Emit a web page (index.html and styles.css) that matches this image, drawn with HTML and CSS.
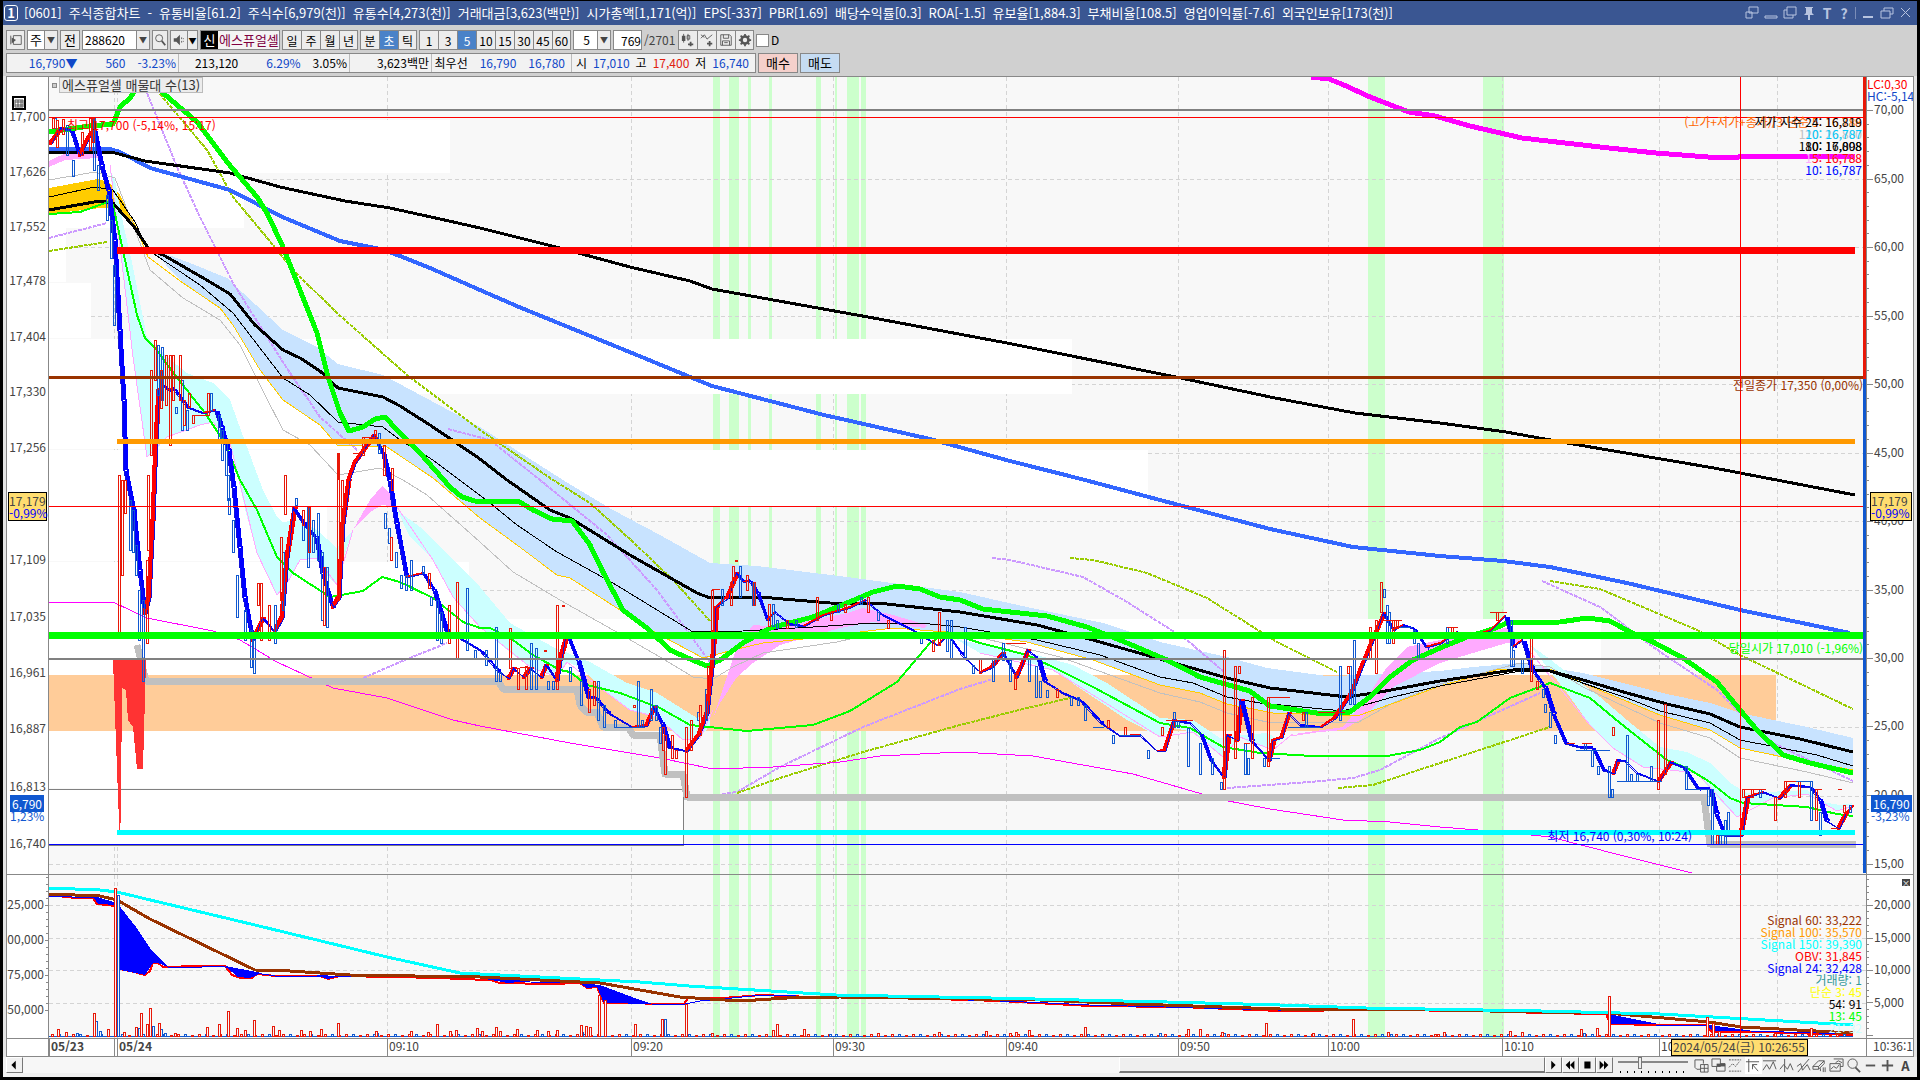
FILE: index.html
```html
<!DOCTYPE html>
<html lang="ko">
<head>
  <meta charset="UTF-8" />
  <title>[0601] 주식종합차트</title>
  <link rel="stylesheet" href="styles.css">
</head>
<body>

  <header class="titlebar">
    <span class="win-no">1</span>
    <h1>
      <span>[0601]</span>
      <span>주식종합차트</span>
      <span>-</span>
      <span>유통비율[61.2]</span>
      <span>주식수[6,979(천)]</span>
      <span>유통수[4,273(천)]</span>
      <span>거래대금[3,623(백만)]</span>
      <span>시가총액[1,171(억)]</span>
      <span>EPS[-337]</span>
      <span>PBR[1.69]</span>
      <span>배당수익률[0.3]</span>
      <span>ROA[-1.5]</span>
      <span>유보율[1,884.3]</span>
      <span>부채비율[108.5]</span>
      <span>영업이익률[-7.6]</span>
      <span>외국인보유[173(천)]</span>
    </h1>
    <div class="win-icons">
      <svg viewBox="0 0 14 14"><path d="M4 1h9v6H4zM1 6h6v6H1z"/></svg>
      <svg viewBox="0 0 14 14"><path d="M1 10h12v2H1z"/></svg>
      <svg viewBox="0 0 14 14"><path d="M4 1h9v8H4zM4 4H1v8h9V9"/></svg>
      <svg viewBox="0 0 14 14"><path class="solid" d="M3 1h8v1h-1v5l2 2H8v5H6V9H2l2-2V2H3z"/></svg>
      <b>T</b>
      <b>?</b>
      <i></i>
      <svg viewBox="0 0 14 14"><path class="solid" d="M2 10h10v2H2z"/></svg>
      <svg viewBox="0 0 14 14"><path d="M4 5V2h9v6h-3M1 5h9v7H1z"/></svg>
      <svg viewBox="0 0 14 14"><path d="M2 2l9 9M11 2l-9 9"/></svg>
    </div>
  </header>

  <div class="toolbar">
    <button class="tool" aria-label="목록"><svg viewBox="0 0 16 16"><path d="M5 3h9v10H5zM2 3v10"/><path class="fill" d="M3 5l5 3-5 4z"/></svg></button>
    <div class="combo w31"><span>주</span><button aria-label="열기">▼</button></div>
    <button class="tool w20">전</button>
    <div class="combo w68"><input type="text" value="288620" aria-label="종목코드" /><button aria-label="열기">▼</button></div>
    <button class="tool w16" aria-label="검색"><svg viewBox="0 0 16 16"><circle cx="7" cy="6" r="4"/><path d="M10 9l4 5" stroke-width="2"/></svg></button>
    <div class="group sound">
      <button aria-label="소리"><svg viewBox="0 0 16 16"><path class="fill" d="M2 6h3l4-4v12L5 10H2z"/><path d="M11 5v2M11 9v2M13 6v1M13 9v1"/></svg></button>
      <button class="thin" aria-label="열기">▼</button>
    </div>
    <div class="stock"><b>신</b><span>에스퓨얼셀</span></div>
    <div class="group">
      <button>일</button><button>주</button><button>월</button><button>년</button>
    </div>
    <div class="group">
      <button>분</button><button class="on">초</button><button>틱</button>
    </div>
    <div class="group">
      <button>1</button><button>3</button><button class="on">5</button><button>10</button><button>15</button><button>30</button><button>45</button><button>60</button>
    </div>
    <div class="combo w38"><input type="text" class="mid" value="5" aria-label="주기" /><button aria-label="열기">▼</button></div>
    <input type="text" class="count" value="769" aria-label="조회수" />
    <span class="total">/2701</span>
    <div class="group icons">
      <button aria-label="차트유형"><svg viewBox="0 0 16 16"><path class="fill" d="M1 3h4v6H1zM10 10h2v5h-2zM8 12h6v2H8z"/><path d="M3 1v10M8 1v8M7 3h3v4H7z"/></svg></button>
      <button aria-label="지표추가"><svg viewBox="0 0 16 16"><path d="M1 6l4-4 3 5 6-5M1 2l4 3"/><path class="fill" d="M10 9h2v6h-2zM8 11h6v2H8z"/></svg></button>
      <button aria-label="저장"><svg viewBox="0 0 16 16"><path d="M2 2h10l2 2v10H2zM5 2v4h6V2M4 14V9h8v5M6 11h4"/></svg></button>
      <button aria-label="설정"><svg viewBox="0 0 16 16"><circle cx="8" cy="8" r="4" stroke-width="3"/><path d="M8 1v3M8 12v3M1 8h3M12 8h3M3 3l2 2M11 11l2 2M13 3l-2 2M5 11l-2 2" stroke-width="2"/></svg></button>
    </div>
    <label class="check"><input type="checkbox" />D</label>
  </div>

  <div class="quotebar">
    <div class="quote">
      <div class="cell c1"><span class="down">16,790<em>▼</em></span><span class="down">560</span><span class="down">-3.23%</span></div>
      <div class="cell c2"><span>213,120</span><span class="down">6.29%</span><span>3.05%</span></div>
      <div class="cell c3"><span>3,623백만</span></div>
      <div class="cell c4"><span>최우선</span><span class="down">16,790</span><span class="down">16,780</span></div>
      <div class="cell c5"><span>시</span><span class="down">17,010</span><span>고</span><span class="up">17,400</span><span>저</span><span class="down">16,740</span></div>
    </div>
    <button class="buy">매수</button>
    <button class="sell">매도</button>
  </div>

  <main class="chart">
    <div class="axis left" id="leftMain">
      <svg class="grid-icon" viewBox="0 0 14 14"><path d="M1 1h12v12H1z" stroke="#000" stroke-width="2"/><path d="M3 4h8v7H3zM3 6h8M3 9h8M6 4v7M9 4v7"/></svg>
      <div class="price-tag cross">17,179<br><span>-0,99%</span></div>
      <div class="price-tag now"><b>6,790</b><br>1,23%</div>
    </div>

    <section class="plot price">
      <svg id="main" viewBox="49 77 1817 797" preserveAspectRatio="none" shape-rendering="crispEdges">
        <!-- signal bands -->
        <path class="signal" d="M713 77h7v797h-7zM729 77h10v797h-10zM748 77h3v797h-3zM769 77h3v797h-3zM816 77h5v797h-5zM835 77h2v797h-2zM847 77h12v797h-12zM861 77h5v797h-5zM1368 77h17v797h-17zM1483 77h21v797h-21z"/>
        <path class="grid" d="M49 179.500H1866M49 247.500H1866M49 316.500H1866M49 384.500H1866M49 453.500H1866M49 521.500H1866M49 590.500H1866M49 727.500H1866M49 796.500H1866M49 864.500H1866M114.500 77V874M117.500 77V874M387.500 77V874M631.500 77V874M833.500 77V874M1006.500 77V874M1178.500 77V874M1328.500 77V874M1502.500 77V874M1659.500 77V874M1777.500 77V874"/>
        <!-- volume by price -->
        <path fill="#fff" d="M49 120h401v53H49zM49 173h195v55H49zM49 228h17v54H49zM49 283h42v55H49zM49 339h1023v55H49zM49 394h342v55H49zM49 450h1099v56H49zM49 507h278v54H49zM49 562h420v57H49zM49 619h1552v56H49zM49 731h571v57H49z"/>
        <path class="poc" d="M49 675h1727v56H49z"/>
        <path fill="#fff" stroke="#808080" d="M48 789.500H683.500V845.500H48z"/>

        <!-- envelopes -->
        <path fill="#fc0" d="M49 188 98 179 110 183 120 195 135 226 130 222 115 207 100 208 49 214z"/>
        <path fill="#c8e3ff" d="M150 248 190 263 227 278 243 293 283 330 317 347 338 364 383 375 480 427 563 480 613 510 660 535 710 563 757 566 847 577 960 592 1027 607 1103 623 1160 642 1227 657 1267 668 1327 676 1367 675 1440 671 1473 667 1520 663 1583 673 1667 694 1710 703 1740 713 1807 727 1853 738 1853 770 1807 762 1740 748 1710 730 1660 715 1597 689 1550 669 1500 669 1440 686 1397 702 1357 716 1273 713 1227 704 1200 693 1160 685 1093 660 1027 642 960 633 893 628 860 632 813 638 763 643 733 650 703 658 647 628 620 610 570 578 557 575 517 545 480 518 433 478 387 447 337 445 320 425 283 400 260 370 233 325 220 308 183 283z"/>
        <path fill="#cff" d="M110 170 115 180 123 223 133 267 147 337 167 357 187 373 213 383 230 400 247 447 263 490 277 517 283 522 300 520 317 530 337 548 353 530 343 560 337 585 328 577 317 558 300 560 287 583 277 595 257 553 247 517 240 487 230 443 213 422 200 425 167 437 153 453 147 457 133 357 122 263z"/>
        <path fill="#cff" d="M397 510 420 527 450 557 480 587 510 623 553 647 590 662 627 683 657 693 697 718 710 713 710 725 700 738 683 740 657 717 630 710 607 693 580 667 567 662 557 677 530 667 513 655 480 627 453 597 433 560 410 537z"/>
        <path fill="#cff" d="M940 630 960 640 993 647 1037 655 1073 665 1107 683 1160 718 1193 720 1220 738 1243 735 1267 733 1280 740 1273 750 1250 743 1240 737 1223 757 1193 732 1173 728 1160 737 1127 720 1093 697 1053 670 1027 662 980 653z"/>
        <path fill="#cff" d="M1530 645 1547 657 1573 677 1600 697 1627 720 1660 747 1687 752 1710 763 1730 783 1747 793 1807 790 1823 802 1840 805 1853 803 1837 811 1823 804 1807 794 1773 798 1750 807 1737 817 1717 798 1697 773 1670 770 1643 767 1613 748 1590 725 1567 693z"/>
        <path fill="#faf" d="M49 161 70 151 100 150 98 158 65 160 49 167zM353 530 370 500 382 486 392 495 397 507 382 505 370 512zM713 718 727 677 737 647 753 625 780 627 813 620 847 613 863 608 893 615 927 625 925 628 873 622 840 628 780 645 753 663 737 677 720 703zM1287 735 1343 727 1367 697 1387 667 1407 647 1440 640 1510 627 1523 643 1507 643 1473 653 1440 663 1393 687 1360 720 1343 730z"/>
        <path class="thin-pink" d="M110 165 122 263 133 357 147 457 167 437 200 425 213 422 230 443 257 553 277 595 287 583 300 560 317 558 337 585 353 530M397 507 433 560 453 597 480 627 530 667 557 677 567 662 607 693 630 710 657 717 683 740 700 738 713 710M980 653 1053 670 1160 737 1193 732 1223 757 1240 737 1273 750 1290 736 1343 728M1523 643 1590 725 1613 748 1643 767 1697 773 1737 817 1773 798 1807 794 1837 811 1853 806"/>

        <!-- dotted forecasts -->
        <path class="dots purple" d="M49 238 107 223M147 93 177 167 200 217 233 283 267 337 290 373 320 417 357 450M448 429 490 440 540 480 607 535 657 590 710 662M363 678 400 662 447 643M722 794 737 792 780 767 863 727 960 689 993 679M992 558 1010 560 1083 577 1127 602 1187 640 1223 671M1227 788 1310 782 1353 778 1380 770 1440 738 1540 693M1542 581 1600 607 1653 647 1717 690 1747 720 1773 743 1853 781"/>
        <path class="dots olive" d="M49 251 107 242M160 94 207 150 233 197 273 245 293 270 337 313 407 375 480 430 553 480 590 503 633 542 673 580 710 621M737 793 780 778 863 752 960 725 1027 708 1070 698M1070 558 1093 560 1147 573 1207 598 1277 642 1337 672M1338 788 1373 785 1440 763 1550 727M1550 581 1600 589 1697 630 1740 655 1853 709"/>

        <!-- moving averages -->
        <g class="ma">
          <path stroke="#c0c0c0" d="M49 180 95 172 115 178 135 230 150 270 183 298 220 320 240 345 265 395 283 430 310 445 338 475 380 468 403 480 427 495 480 542 513 572 560 600 613 630 660 657 693 677 713 679 733 667 763 653 837 642 880 632 960 633 1003 643 1060 657 1160 693 1200 702 1227 713 1267 722 1357 723 1393 703 1440 684 1520 663 1550 667 1583 687 1660 723 1710 738 1740 758 1807 772 1853 783"/>
          <path stroke="#fc0" d="M113 190 135 225 148 257 183 283 220 308 233 325 260 370 283 400 320 425 337 445 387 447 433 478 480 518 517 545 557 575 570 578 620 610 647 628 703 658 733 650 763 643 813 638 860 632 893 628 960 633 1027 642 1093 660 1160 685 1200 693 1227 704 1273 713 1357 716 1397 702 1440 686 1500 669 1550 669 1597 689 1660 715 1710 730 1740 748 1807 762 1853 770"/>
          <path stroke="#000" d="M49 197 95 187 113 190 135 222 148 250 200 285 233 313 283 378 310 395 338 422 383 427 400 440 433 460 490 503 517 525 557 552 613 583 693 632 743 631 813 627 873 623 920 623 960 627 1037 640 1100 655 1160 677 1193 683 1227 697 1260 703 1343 711 1393 697 1440 686 1520 671 1550 672 1627 698 1660 711 1710 723 1740 740 1817 755 1853 766"/>
          <path stroke="#f0f" d="M49 602 100 602 115 603 147 618 213 631 240 640 277 662 333 688 387 698 453 720 480 726 570 743 660 758 713 769 773 767 840 762 880 756 960 752 1033 756 1133 774 1223 800 1270 809 1343 820 1390 822 1440 827 1503 832 1550 837 1620 855 1692 873"/>
          <path stroke="#36f" stroke-width="4" d="M49 149 110 149 120 152 150 168 230 190 280 216 340 241 380 249 400 256 430 268 480 290 519 307 632 353 712 386 824 415 930 439 1010 461 1085 480 1160 500 1270 529 1353 547 1440 556 1503 561 1550 567 1627 583 1740 610 1850 633"/>
          <path stroke="#000" stroke-width="3" d="M49 152 115 153 145 161 230 173 280 187 345 201 390 208 440 219 480 228 556 247 630 267 690 281 712 289 868 317 1007 343 1176 377 1275 398 1355 413 1440 423 1506 432 1567 443 1714 468 1855 495"/>
          <path stroke="#000" stroke-width="3" d="M49 210 100 201 113 203 135 228 148 248 165 256 205 279 230 294 255 325 283 350 300 358 320 371 338 388 383 397 400 406 430 425 480 459 507 480 550 510 570 518 630 555 667 576 697 593 710 598 760 597 830 603 887 604 960 612 1037 625 1093 640 1160 659 1227 678 1270 688 1347 697 1380 692 1440 681 1520 669 1550 671 1583 680 1627 693 1667 704 1710 714 1740 727 1800 739 1853 752"/>
          <path stroke="#0f0" stroke-width="2" d="M49 214 80 212 108 202 113 205 125 260 137 315 145 338 155 348 175 375 205 413 225 443 240 480 257 510 277 557 293 573 330 597 363 591 382 577 400 582 433 598 463 622 480 628 490 628 513 640 533 655 560 670 570 672 587 685 620 693 660 708 690 725 747 731 813 725 850 711 897 682 930 643 947 632 980 643 1027 655 1053 667 1093 687 1160 723 1190 728 1223 747 1260 753 1313 756 1387 756 1420 750 1440 742 1460 727 1477 722 1510 698 1550 683 1590 698 1620 723 1667 760 1687 768 1710 782 1730 798 1743 803 1807 807 1837 814 1853 816"/>
          <path stroke="#0f0" stroke-width="5" d="M49 132 90 126 113 124 120 107 130 98 138 86 147 77 155 84 163 93 197 122 227 162 257 197 267 213 283 247 300 290 317 333 328 377 340 413 349 431 363 427 375 419 385 417 397 430 420 453 450 487 462 497 475 501 518 501 533 510 552 519 572 521 590 545 603 572 623 610 647 628 670 650 690 659 707 666 720 660 743 643 770 628 813 617 847 603 873 592 897 586 920 589 940 597 960 600 983 609 1047 616 1087 627 1127 643 1167 660 1200 677 1250 691 1270 706 1323 714 1350 712 1370 697 1390 677 1413 660 1440 648 1467 637 1493 629 1507 623 1560 622 1587 618 1610 621 1630 632 1653 642 1683 658 1717 682 1740 710 1757 730 1783 755 1810 763 1853 773"/>
          <path stroke="#f0f" stroke-width="5" d="M1311 77 1329 79 1344 85 1370 97 1409 112 1435 116 1470 126 1522 138 1565 143 1609 148 1656 153 1708 157 1739 157 1741 156 1855 156"/>
          <path stroke="#c0c0c0" stroke-width="7" d="M137 645 146 681 498 681 503 689 577 689 580 705 586 712 597 712 603 727 628 727 633 735 660 735 665 774 683 774 687 797 1704 797 1710 844 1856 844"/>
        </g>

        <path fill="#f33" d="M113 660H146L143 769H137L133 727 128 720 126 690 122 688 121 800 120 847 117 770z"/>
        <g id="price"></g>
        <g id="candles"></g>

        <!-- price levels -->
        <path class="level" stroke="#808080" stroke-width="2" d="M49 110H1866M49 659H1866"/>
        <path class="level" stroke="red" d="M49 117.500H1866"/>
        <path class="level" stroke="red" stroke-width="7" d="M117 250.500H1855"/>
        <path class="level" stroke="#930" stroke-width="3" d="M49 377.500H1866"/>
        <path class="level" stroke="#f90" stroke-width="5" d="M117 441.500H1855"/>
        <path class="level" stroke="#0f0" stroke-width="7" d="M49 635.500H1866"/>
        <path class="level" stroke="#0ff" stroke-width="5" d="M117 832.500H1855"/>
        <path class="level" stroke="blue" d="M49 844.500H1866"/>
        <path class="level" stroke="red" d="M49 506.500H1866M1740.500 77V874"/>
      </svg>
      <div class="chart-title"><i></i><span>에스퓨얼셀 매물대 수(13)</span></div>
      <span class="note high">최고 17,700 (-5,14%, 15:17)</span>
      <span class="note prev">전일종가 17,350 (0,00%)</span>
      <span class="note open">당일시가 17,010 (-1,96%)</span>
      <span class="note low">최저 16,740 (0,30%, 10:24)</span>
      <div class="legend under">
        <span class="orange">(고가+저가+종가)/3 단순 5: 16,788</span>
        <span class="gray">120: 26,800</span>
        <span class="black">180: 16,808</span>
        <span class="pink">15: 16,788</span>
        <span class="pale">30: 16,787</span>
      </div>
      <div class="legend">
        <span class="black">저가 지수 24: 16,819</span>
        <span class="cyan">10: 16,787</span>
        <span class="black">10: 17,098</span>
        <span class="red">5: 16,788</span>
        <span class="blue">10: 16,787</span>
      </div>
    </section>

    <div class="axis right" id="rightMain">
      <div class="limits"><span class="red">LC:0,30</span><br><span class="down">HC:-5,14</span></div>
      <div class="price-tag cross">17,179<br><span>-0,99%</span></div>
      <div class="price-tag now"><b>16,790</b><br>-3,23%</div>
    </div>

    <div class="axis left lower" id="leftSub"></div>
    <section class="plot lower">
      <svg id="sub" viewBox="49 875 1817 163" preserveAspectRatio="none" shape-rendering="crispEdges">
        <path class="signal" d="M713 875h7v163h-7zM729 875h10v163h-10zM748 875h3v163h-3zM769 875h3v163h-3zM816 875h5v163h-5zM835 875h2v163h-2zM847 875h12v163h-12zM861 875h5v163h-5zM1368 875h17v163h-17zM1483 875h21v163h-21z"/>
        <path class="grid" d="M49 905.500H1866M49 938.500H1866M49 970.500H1866M49 1003.500H1866M114.500 875V1038M117.500 875V1038M387.500 875V1038M631.500 875V1038M833.500 875V1038M1006.500 875V1038M1178.500 875V1038M1328.500 875V1038M1502.500 875V1038M1659.500 875V1038M1777.500 875V1038"/>
        <path class="line" stroke="red" stroke-width="2" d="M49 895 75 898 93 898 97 904 115 906 119 969 130 971 145 975 150 971 153 963 158 963 163 967 200 966 225 966 232 975 240 978 252 978 257 974 275 976 320 976 328 979 340 976 440 978 460 979 490 980 500 983 550 984 580 983 587 988 597 987 604 1003 684 1004 688 998 722 998 762 995 811 997 901 998 1000 1001 1090 1006 1180 1007 1280 1011 1370 1010 1484 1011 1540 1013 1606 1014 1610 1024 1656 1025 1706 1025 1712 1032 1760 1032 1853 1035"/>
        <path fill="blue" d="M75 895 94 896 117 903 136 927 150 948 168 967 158 963 153 963 145 975 120 970 117 905 98 904 94 898zM225 966 262 973 250 978 238 977zM315 975 340 976 328 979zM480 978 530 981 508 983zM580 983 600 985 640 1000 652 1004 604 1003 597 987 587 988zM1270 1008 1300 1010 1280 1011zM1609 1014 1658 1024 1611 1024zM1707 1025 1750 1031 1712 1031z"/>
        <path class="line" stroke="blue" d="M49 896 94 898M168 967 190 968 215 966 225 967 262 974 275 976 340 976 440 976 490 978 530 982 580 983M652 1004 685 1004 700 1001 722 999 762 995 780 995 811 997 901 998 1000 1001 1048 1003 1089 1005 1280 1010 1400 1009 1484 1010 1607 1014M1656 1025 1705 1025 1750 1031 1853 1034"/>
        <path class="line" stroke="#930" stroke-width="3" d="M49 894 100 896 117 900 150 919 255 970 290 971 350 975 480 977 600 983 640 990 680 997 740 1001 787 998 840 997 1040 1000 1134 1004 1280 1009 1360 1010 1440 1010 1541 1012 1607 1013 1709 1022 1741 1027 1853 1033"/>
        <path class="line" stroke="#0ff" stroke-width="3" d="M49 888 100 890 117 892 255 925 387 957 460 973 640 982 689 986 836 995 991 998 1167 1002 1280 1005 1366 1008 1541 1011 1660 1014 1853 1025"/>
        <g id="volume"></g>
        <path class="level" stroke="red" d="M1740.500 875V1038"/>
      </svg>
      <div class="legend sub">
        <span class="brown">Signal 60: 33,222</span>
        <span class="amber">Signal 100: 35,570</span>
        <span class="aqua">Signal 150: 39,390</span>
        <span class="red">OBV: 31,845</span>
        <span class="blue">Signal 24: 32,428</span>
        <span class="teal">거래량: 1</span>
        <span class="yellow">단순 3: 45</span>
        <span class="black">54: 91</span>
        <span class="lime">13: 45</span>
        <span class="pale">21: 32</span>
      </div>
    </section>
    <div class="axis right lower" id="rightSub"><button class="close" aria-label="닫기">×</button></div>

    <div class="time-edge"></div>
    <div class="times" id="times"><span class="time-tag">2024/05/24(금) 10:26:55</span></div>
    <div class="time-edge end">10:36:1</div>
  </main>

  <footer class="footer">
    <button class="push" aria-label="왼쪽"><svg viewBox="0 0 16 16"><path d="M10 3v10L5 8z"/></svg></button>
    <div class="track"><div class="thumb"></div></div>
    <button class="push" aria-label="재생"><svg viewBox="0 0 16 16"><path d="M6 3v10l5-5z"/></svg></button>
    <button class="push" aria-label="뒤로"><svg viewBox="0 0 16 16"><path d="M8 3v10L3 8zM13 3v10L8 8z"/></svg></button>
    <button class="push" aria-label="정지"><svg viewBox="0 0 16 16"><path d="M5 4h7v8H5z"/></svg></button>
    <button class="push" aria-label="앞으로"><svg viewBox="0 0 16 16"><path d="M3 3v10l5-5zM8 3v10l5-5z"/></svg></button>
    <input type="range" class="speed" min="0" max="10" value="3" aria-label="속도" />
    <div class="draw-tools">
      <button aria-label="창추가"><svg viewBox="0 0 16 16"><path d="M7 12H3L1 10V2h9v4M7 7h8v8H7zM11 7v8M7 11h8"/></svg></button>
      <button aria-label="복사"><svg viewBox="0 0 16 16"><path d="M1 1h9v8H1zM6 9v5h9V6h-5"/><path class="fill" d="M6 6h9v3H6z"/></svg></button>
      <button aria-label="추세"><svg viewBox="0 0 16 16"><path d="M1 10l4-4 3 3 4-5M1 14h13M1 2h13" stroke-dasharray="2 1"/></svg></button>
      <button class="on" aria-label="커서"><svg viewBox="0 0 16 16"><path d="M1 4h14M4 1v14M8 7l6 7M8 12V7h5"/></svg></button>
      <button aria-label="수평선"><svg viewBox="0 0 16 16"><path d="M1 3h14M1 13l4-6 3 5 4-8 3 8"/></svg></button>
      <button aria-label="수직선"><svg viewBox="0 0 16 16"><path d="M6 1v14M1 12l4-5 4 5 3-6 3 7"/></svg></button>
      <button aria-label="추세선"><svg viewBox="0 0 16 16"><path d="M2 15L14 1M1 9l4-3 2 7 5-6 3 6"/></svg></button>
      <button aria-label="모두지우기"><svg viewBox="0 0 16 16"><path d="M1 9l6-6h6l-6 6zM1 9v3h6V9M7 12l6-6V3M9 14v-3M12 10v5M14 10v5"/></svg></button>
      <button aria-label="그림"><svg viewBox="0 0 16 16"><path d="M5 1h10v8h-3M1 6h11v8H1zM2 12l3-3 3 2 3-4M7 5l3-2 4 2"/></svg></button>
      <button aria-label="확대경"><svg viewBox="0 0 16 16"><circle cx="7" cy="6" r="5"/><path d="M10 10l5 5" stroke-width="2"/></svg></button>
      <button aria-label="축소"><svg viewBox="0 0 16 16"><path d="M3 8h10" stroke-width="2"/></svg></button>
      <button aria-label="확대"><svg viewBox="0 0 16 16"><path d="M2 8h12M8 2v12" stroke-width="2"/></svg></button>
      <button aria-label="글자"><b>A</b></button>
    </div>
  </footer>

  <script src="script.js"></script>
</body>
</html>
```
FILE: styles.css
```css
* {
  box-sizing: border-box;
}
body {
  margin: 0;
  height: 100vh;
  display: flex;
  flex-direction: column;
  background: #e4e4e4;
  border: solid #000;
  border-width: 1px 3px 3px 3px;
  font-family: "Noto Sans CJK KR", sans-serif;
  font-size: 13px;
  line-height: 16px;
  color: #000;
  overflow: hidden;
}
button, input {
  font: inherit;
  color: inherit;
  margin: 0;
  padding: 0;
}
svg {
  display: block;
  fill: none;
  stroke: #555;
}
svg .fill {
  fill: #555;
  stroke: none;
}

/* title */
.titlebar {
  height: 24px;
  flex: none;
  display: flex;
  align-items: center;
  gap: 6px;
  padding: 0 4px 0 1px;
  background: #3a5692;
  color: #fff;
}
.win-no {
  width: 14px;
  height: 16px;
  border: 1px solid #fff;
  border-radius: 3px;
  font-weight: bold;
  line-height: 14px;
  text-align: center;
}
h1 {
  flex: 1;
  display: flex;
  gap: 7px;
  margin: 0;
  font-size: 13px;
  font-weight: normal;
  white-space: nowrap;
}
.win-icons {
  display: flex;
  align-items: center;
  gap: 5px;
  color: #b8c4e0;
}
.win-icons svg {
  width: 14px;
  height: 14px;
  stroke: #b8c4e0;
}
.win-icons .solid {
  fill: #b8c4e0;
  stroke: none;
}
.win-icons b {
  width: 12px;
  font-size: 14px;
  text-align: center;
}
.win-icons i {
  height: 12px;
  border-left: 1px solid #7b8db8;
}

/* toolbar */
.toolbar, .quotebar {
  flex: none;
  display: flex;
  background: #d0d0d0;
  padding-left: 3px;
  gap: 2px;
}
.toolbar {
  height: 27px;
  padding-top: 5px;
}
.toolbar button {
  height: 20px;
  background: #ececec;
  border: 1px solid #888;
  line-height: 18px;
}
.toolbar svg {
  width: 14px;
  height: 14px;
  margin: 0 auto;
}
.tool {
  width: 19px;
}
.combo {
  display: flex;
  height: 20px;
  background: #fff;
  border: 1px solid #888;
  line-height: 18px;
}
.combo span, .combo input {
  flex: 1;
  min-width: 0;
  padding-left: 2px;
  border: none;
  background: none;
}
.combo .mid {
  text-align: center;
}
.toolbar .combo button {
  width: 13px;
  height: 18px;
  border-width: 0 0 0 1px;
  font-size: 8px;
  color: #444;
}
.w16 {
  width: 16px;
}
.w20 {
  width: 20px;
}
.w31 {
  width: 31px;
}
.w38 {
  width: 38px;
}
.w68 {
  width: 68px;
}
.group {
  display: flex;
  border: 1px solid #888;
  height: 20px;
}
.toolbar .group button {
  width: 19px;
  height: 18px;
  border-width: 0 1px 0 0;
  font-size: 12px;
  line-height: 17px;
}
.toolbar .group button:last-child {
  width: 17px;
  border-right: none;
}
.toolbar .group .on {
  background: #4a82c8;
  color: #fff;
}
.toolbar .sound button:first-child {
  width: 17px;
}
.toolbar .sound .thin:last-child {
  width: 9px;
  font-size: 8px;
}
.stock {
  display: flex;
  width: 80px;
  height: 20px;
  background: #f4f4f4;
  border: 1px solid #888;
  color: #800040;
  line-height: 18px;
}
.stock b {
  width: 17px;
  margin-right: 1px;
  background: #000;
  color: #fff;
  font-weight: normal;
  text-align: center;
}
.combo input, .count {
  font-size: 12px;
}
.count {
  width: 29px;
  height: 20px;
  border: 1px solid #888;
  text-align: right;
}
.total {
  width: 32px;
  font-size: 12px;
  line-height: 20px;
  color: #444;
}
.check {
  display: flex;
  align-items: center;
  gap: 2px;
  height: 20px;
  font-size: 12px;
}
.check input {
  width: 13px;
  height: 13px;
  appearance: none;
  background: #fff;
  border: 1px solid #888;
}

/* quote */
.quotebar {
  height: 24px;
  padding-top: 1px;
}
.quote {
  display: flex;
  width: 750px;
  height: 20px;
  background: #f2f2f2;
  border: 1px solid #888;
  font-size: 12px;
  line-height: 18px;
}
.cell {
  display: flex;
  flex: none;
  justify-content: flex-end;
  padding-right: 2px;
  border-right: 1px solid #bbb;
  white-space: nowrap;
}
.cell:last-child {
  border: none;
}
.cell em {
  font-style: normal;
}
.c1 {
  width: 172px;
  gap: 12px;
}
.c1 span:first-child {
  margin-right: 16px;
}
.c2 {
  width: 171px;
  gap: 12px;
}
.c2 span:first-child {
  margin-right: 16px;
}
.c3 {
  width: 82px;
}
.c4 {
  width: 140px;
  gap: 12px;
  padding-right: 6px;
}
.c5 {
  flex: 1;
  gap: 6px;
  padding-right: 6px;
}
.down {
  color: #1048c8;
}
.up {
  color: #e02010;
}
.buy, .sell {
  width: 40px;
  height: 20px;
  border: 1px solid #888;
  background: #f5d0cb;
}
.sell {
  background: #c5dcf3;
}

/* chart */
.chart {
  flex: 1;
  min-height: 0;
  margin: 0 3px;
  display: grid;
  grid-template-columns: 42px 1fr 47px;
  grid-template-rows: 798fr 164fr 18px;
  background: #fff;
  border: 1px solid #888;
  border-width: 1px 1px 0 1px;
  font-size: 12px;
}
.chart > * {
  min-width: 0;
  min-height: 0;
  border-bottom: 1px solid #888;
}
.plot {
  position: relative;
  background: #f8f8f8;
  overflow: hidden;
}
.plot svg {
  width: 100%;
  height: 100%;
  stroke: none;
}
/* up to the previous close red, below it blue */
.price::after {
  content: "";
  position: absolute;
  top: 0;
  right: 0;
  bottom: 1px;
  width: 3px;
  background: linear-gradient(#e81808 38%, #1058d0 38%);
}
.axis {
  position: relative;
  overflow: hidden;
  color: #444;
}
.axis.left {
  border-right: 1px solid #888;
}
.axis.right {
  border-left: 1px solid #888;
}
.axis .mark {
  position: absolute;
  right: 2px;
  margin-top: -9px;
  line-height: 16px;
}
.axis.right .mark {
  right: auto;
  left: 7px;
}
.axis.lower.left .mark {
  right: 4px;
}
.axis .tick {
  position: absolute;
  left: 0;
  width: 2px;
  border-top: 1px solid #888;
}
.axis .tick.big {
  width: 6px;
}
.axis.left .tick {
  left: auto;
  right: 0;
}
.axis.left .tick.big {
  width: 3px;
}
.grid-icon {
  position: absolute;
  left: 5px;
  top: 19px;
  width: 14px;
  height: 14px;
}
.price-tag {
  position: absolute;
  z-index: 1;
  line-height: 12px;
  white-space: nowrap;
}
.price-tag.cross {
  top: 415px;
  height: 29px;
  padding: 2px 0 0 0;
  background: #ffdd70;
  border: 1px solid #000;
  color: #444;
}
.price-tag.cross span {
  color: blue;
}
.price-tag.now {
  top: 721px;
  color: #1058d0;
}
.price-tag b {
  background: #1058d0;
  color: #fff;
  font-weight: normal;
  padding: 0 2px;
}
.left .cross {
  left: 1px;
  width: 39px;
}
.left .now {
  left: 3px;
}
.right .cross {
  left: 3px;
  width: 42px;
}
.right .now {
  left: 4px;
}
.limits {
  line-height: 12px;
  padding: 1px 0 0 0;
  white-space: nowrap;
}
.signal {
  fill: #cfc;
}
.grid {
  stroke: #d4d4d4;
  stroke-dasharray: 4 3;
}
.poc {
  fill: #ffcc99;
}
.thin-pink {
  stroke: #faf;
}
.dots {
  stroke-width: 2;
  stroke-dasharray: 4 1;
}
.dots.purple {
  stroke: #c9f;
}
.dots.olive {
  stroke: #9c0;
}
.ma path, .line {
  fill: none;
  stroke-linejoin: round;
}
.candle-up, .vol-up {
  stroke: #e81808;
}
.candle-down, .vol-down {
  stroke: #1058d0;
}
.vol-up, .vol-down {
  fill: #f8f8f8;
}
.chart-title {
  position: absolute;
  left: 3px;
  top: 0;
  display: flex;
  align-items: center;
  gap: 2px;
  font-size: 13px;
  line-height: 14px;
}
.chart-title i {
  width: 5px;
  height: 5px;
  border: 1px solid #888;
  background: #ccc;
}
.chart-title span {
  padding: 0 2px;
  background: #ececec;
  border: 1px solid #bbb;
  color: #333;
}
.note {
  position: absolute;
  line-height: 14px;
  white-space: nowrap;
}
.note.high {
  left: 18px;
  top: 41px;
  color: red;
}
.note.prev {
  right: 3px;
  top: 301px;
  color: #930;
}
.note.open {
  right: 3px;
  top: 564px;
  color: #0f0;
}
.note.low {
  right: 174px;
  top: 752px;
  color: blue;
}
.legend {
  position: absolute;
  right: 4px;
  top: 39px;
  display: flex;
  flex-direction: column;
  align-items: flex-end;
  line-height: 12px;
  white-space: nowrap;
}
.orange {
  color: #f60;
}
.gray {
  color: #c0c0c0;
}
.black {
  color: #000;
}
.pink {
  color: #faf;
}
.pale {
  color: #cff;
}
.cyan {
  color: #00ccff;
}
.red {
  color: red;
}
.blue {
  color: blue;
}
.brown {
  color: #930;
}
.amber {
  color: #f90;
}
.aqua {
  color: #0ff;
}
.teal {
  color: #399;
}
.yellow {
  color: #ff0;
}
.lime {
  color: #0f0;
}
.close {
  position: absolute;
  right: 3px;
  top: 4px;
  width: 8px;
  height: 7px;
  border: none;
  background: #444;
  color: #fff;
  font-size: 8px;
  line-height: 7px;
}
.times {
  position: relative;
  background: #fff;
  border-left: 1px solid #888;
  margin-left: -1px;
}
.times span {
  position: absolute;
  top: 0;
  height: 17px;
  padding-left: 1px;
  border-left: 1px solid #888;
  line-height: 14px;
  color: #444;
}
.times .day {
  font-weight: bold;
}
.times .time-tag {
  z-index: 1;
  right: 58px;
  width: 137px;
  border: 1px solid #000;
  background: #ffdd70;
  white-space: nowrap;
}
.time-edge.end {
  border-left: 1px solid #888;
  padding-left: 6px;
  line-height: 14px;
  color: #444;
  overflow: hidden;
}

/* footer */
.footer {
  flex: none;
  height: 20px;
  padding: 0 3px 3px 3px;
  display: flex;
  background: #f0f0f0;
}
.push {
  width: 17px;
  height: 16px;
  background: #f0f0f0;
  border: 1px solid #fff;
  border-right-color: #777;
  border-bottom-color: #777;
}
.push svg {
  width: 14px;
  height: 14px;
  fill: #000;
  stroke: none;
}
.track {
  flex: 1;
  height: 16px;
  display: flex;
  justify-content: flex-end;
  background: #f7f7f7;
}
.thumb {
  width: 28%;
  background: #efefef;
  border: 1px solid #fff;
  border-right-color: #777;
  border-bottom: 2px solid #777;
}
.speed {
  width: 70px;
  height: 16px;
  margin: 0 6px 0 5px;
  appearance: none;
  background: linear-gradient(#888, #888) 0 4px / 100% 2px no-repeat, repeating-linear-gradient(90deg, #000 0 1px, transparent 1px 7px) 2px 14px / 100% 2px no-repeat;
}
.speed::-webkit-slider-thumb {
  appearance: none;
  width: 4px;
  height: 12px;
  margin-top: -4px;
  background: #eee;
  border: 1px solid #777;
}
.draw-tools {
  display: flex;
  width: 220px;
  justify-content: space-between;
}
.draw-tools button {
  width: 17px;
  height: 17px;
  border: none;
  background: none;
  color: #444;
}
.draw-tools .on {
  background: #fff;
}
.draw-tools svg {
  width: 15px;
  height: 15px;
}
```
FILE: script.js
```js
const NS = "http://www.w3.org/2000/svg";

function draw(parent, tag, attrs) {
  const el = document.createElementNS(NS, tag);
  for (const key in attrs) el.setAttribute(key, attrs[key]);
  parent.appendChild(el);
}

// price curves, x y pairs
const curves = [
  "49 143 60 128 70 130 78 155 87 137 93 130 100 165 107 190 113 240 118 330 122 400 124 470 132 510 138 570 143 613 147 597 151 520 154 440 157 390 163 385 167 390 173 388 187 407 203 413 215 410 220 427 227 450 232 487 238 547 243 597 251 640 262 618 273 632 280 617 285 557 293 508 303 523 315 537 321 573 331 607 337 597 341 523 347 480 353 463 373 435 382 453 388 480 395 523 405 577 423 573 433 590 445 630 467 642 480 650 497 670 507 678 513 668 522 677 530 668 540 677 545 665 555 680 558 660 566 633 577 660 587 697 595 697 607 712 632 727 645 725 653 707 661 723 668 747 685 751 697 735 705 713 710 667 715 607 726 597 736 573 743 582 749 580 757 593 766 620 775 612 790 624 803 626 823 615 850 607 865 600 883 615 913 630 937 645 947 635 960 653",
  "960 653 980 672 990 667 1002 653 1015 677 1027 650 1037 657 1043 680 1063 693 1080 700 1100 722 1120 736 1140 735 1157 751 1163 750 1173 720 1190 723 1200 733 1210 760 1222 777 1227 735 1235 740 1240 700 1250 740 1267 760 1272 740 1280 737 1288 713 1300 725 1320 727 1333 718 1350 693 1360 667 1371 640 1383 613 1392 630 1403 625 1413 628 1425 647 1440 643 1457 632 1467 638 1490 630 1505 616 1512 647 1522 640 1530 667 1544 687 1552 713 1565 743 1580 747 1592 747 1603 770 1612 773 1617 760 1625 761 1637 773 1657 781 1670 762 1683 767 1697 788 1709 788 1715 813 1724 835 1739 835 1746 797 1763 792 1778 798 1790 785 1810 787 1819 800 1825 820 1837 828 1845 813 1853 806"
];

const price = document.getElementById("price");
for (const curve of curves) {
  const n = curve.split(" ").map(Number);
  let trail = "";
  for (let i = 0; i + 3 < n.length; i += 2) {
    const [x0, y0, x1, y1] = n.slice(i, i + 4);
    const color = y1 < y0 ? "red" : "blue";
    const steep = Math.abs(y1 - y0) / (x1 - x0);
    const w = steep > 3 ? 4 : steep > 1 ? 3 : 1;
    draw(price, "path", {
      d: `M${x0} ${y0 - 1}L${x1} ${y1 - 1}h${w}v2L${x0 + w} ${y0 + 1}h${-w}z`,
      fill: color,
      stroke: w > 1 ? color : "none"
    });
    trail += `${i ? "L" : "M"}${x0 + (y1 < y0 ? w : 0)} ${y0 + 1}`;
  }
  draw(price, "path", { d: trail, fill: "none", stroke: "#1414d8" });
}

// candles: x top bottom
const up = "53 118 128,57 120 147,63 119 134,82 132 155,90 118 150,93 118 142,119 475 632,122 480 575,125 480 513,147 560 643,148 475 550,151 370 455,155 340 380,161 370 408,166 355 405,170 355 445,173 355 400,180 355 400,184 400 425,189 393 407,193 415 423,208 393 415,258 583 605,261 583 640,269 605 640,281 537 600,285 475 514,303 510 525,309 507 552,324 567 625,338 453 600,342 480 560,363 437 455,375 430 440,384 445 475,392 468 490,391 537 560,429 573 588,449 605 643,457 582 659,510 628 668,518 668 689,526 666 689,545 650 651,557 605 689,563 605 606,589 689 712,594 681 705,634 705 707,663 727 750,665 735 774,672 735 758,676 750 758,686 727 797,691 720 750,700 705 735,708 666 700,712 590 666,731 582 605,733 566 585,736 560 561,747 575 590,754 582 605,769 604 626,787 620 628,817 597 620,831 612 620,845 604 612,868 597 612,888 620 628,933 640 651,939 612 645,980 658 673,1015 673 689,1057 689 697,1108 720 727,1125 727 735,1162 727 735,1224 650 789,1235 666 758,1239 666 673,1252 697 758,1268 697 766,1303 712 720,1348 666 673,1370 627 658,1376 620 673,1381 582 612,1393 620 643,1397 620 628,1452 627 635,1497 612 620,1531 635 681,1537 681 689,1613 727 735,1658 720 789,1665 704 774,1717 835 844,1743 789 797,1752 789 797,1775 797 820,1785 781 797,1799 781 797,1816 789 820,1844 805 812";
const down = "55 118 128,67 125 155,73 160 176,94 118 170,98 165 190,107 195 220,111 220 258,114 265 325,130 500 550,133 510 552,136 545 575,139 590 640,143 600 681,158 345 395,162 347 400,182 380 430,176 407 413,187 410 430,211 393 410,219 415 440,222 430 460,226 440 475,228 475 500,229 498 514,233 520 552,237 575 617,245 610 640,251 630 667,254 640 673,275 605 643,283 552 610,296 498 505,303 510 540,308 507 567,313 520 552,318 513 560,322 552 620,327 567 627,379 433 453,385 513 528,389 528 543,396 552 567,401 575 588,406 575 590,411 560 590,423 566 573,431 597 605,437 600 640,441 612 643,467 588 650,475 650 658,486 650 665,496 627 681,500 672 681,531 643 689,536 648 689,548 681 689,553 681 689,570 667 681,581 681 705,598 681 720,604 705 727,615 720 727,638 681 727,642 720 727,651 689 720,656 705 720,660 727 743,698 712 720,706 689 720,722 589 605,740 566 597,753 582 605,773 604 626,777 620 628,796 620 627,838 604 612,861 597 604,878 612 620,921 635 643,947 620 651,951 620 658,965 627 658,973 665 673,993 658 681,1003 643 660,1010 660 681,1029 658 681,1036 666 697,1040 681 697,1047 690 697,1071 697 705,1078 697 705,1085 705 720,1113 735 743,1148 750 758,1174 712 727,1178 720 727,1188 728 766,1200 743 774,1212 758 774,1221 782 789,1245 743 774,1248 758 774,1264 758 766,1306 712 727,1340 666 720,1350 666 704,1354 640 704,1384 589 597,1387 605 643,1389 612 643,1414 630 643,1418 643 658,1447 627 643,1511 620 666,1513 650 666,1522 658 673,1543 689 697,1545 704 712,1550 712 727,1555 735 743,1585 743 750,1592 750 766,1598 766 774,1609 766 797,1612 789 797,1627 735 781,1631 774 781,1637 774 781,1651 766 781,1686 766 789,1708 789 805,1712 789 844,1720 835 844,1725 820 844,1728 812 835,1760 789 797,1811 781 820,1820 812 835,1850 805 812";

function candles(list, cls) {
  let d = "";
  for (const item of list.split(",")) {
    const [x, top, bottom] = item.split(" ").map(Number);
    d += `M${x - 1} ${top}h2V${bottom}h-2z`;
  }
  draw(document.getElementById("candles"), "path", { d, class: cls });
}
candles(down, "candle-down");
candles(up, "candle-up");
// short dashes where the price did not move
draw(document.getElementById("candles"), "path", {
  class: "candle-up",
  d: "M192 415H208M353 453H363M338 453V480M363 437H378M455 658H467M520 667H530M712 589H720M1006 643H1026M1166 720H1193M1244 743H1250M1268 697H1290M1318 712H1345M1384 620H1402M1447 627H1458M1490 612H1507M1567 743H1575M1582 743H1592M1743 789H1766M1786 781H1796M1816 789H1822M1831 828H1838M1838 789H1842"
});
draw(document.getElementById("candles"), "path", {
  class: "candle-down",
  d: "M615 727H645M1093 727H1104M1120 735H1142M1270 758H1280M1288 727H1320M1400 627H1412M1576 750H1610M1617 781H1662M1740 789V797M1720 835H1740M1796 781H1812M1686 789H1708"
});

// volume: x top
const volUp = "58 1029,66 1032,94 1013,108 1029,115 888,124 1032,136 1027,141 1013,147 1024,150 1008,159 1023,175 1033,207 1027,219 1024,228 1011,237 1028,245 1030,254 1020,273 1026,279 1030,301 1030,310 1031,321 1029,338 1023,376 1031,411 1031,428 1032,437 1024,450 1031,456 1030,477 1028,482 1031,496 1027,500 1031,517 1029,537 1030,548 1031,557 1030,581 1025,586 1026,590 1027,599 995,605 1000,635 1024,662 1019,686 1004,712 1033,773 1030,777 1024,804 1029,878 1033,939 1032,986 1031,1010 1033,1016 1032,1029 1030,1085 1027,1188 1029,1200 1029,1222 1032,1266 1023,1353 1019,1313 1033,1388 1032,1435 1034,1444 1032,1510 1031,1522 1032,1581 1029,1597 1028,1609 996,1707 1017,1713 1023,1719 1031,1775 1033,1811 1028";
const volDown = "77 1033,96 1021,100 1031,118 895,139 1028,153 1026,161 1029,165 1033,377 1033,582 1032,665 1019,830 1034,1160 1033,1224 1033,1391 1034,1584 1033";

function volume(list, cls) {
  let d = "";
  for (const item of list.split(",")) {
    const [x, top] = item.split(" ").map(Number);
    d += `M${x - 1} ${top}h2V1036h-2z`;
  }
  draw(document.getElementById("volume"), "path", { d, class: cls });
}
const quiet = [];
for (let x = 52; x < 1850; x += 7) quiet.push(x + " " + (1035 - (x * x) % 3));
draw(document.getElementById("volume"), "path", { d: "M49 1036.5H1853", stroke: "#1058d0" });
volume(quiet.filter((v, i) => i % 3 == 1).join(","), "vol-down");
volume(quiet.filter((v, i) => i % 3 != 1).join(","), "vol-up");
volume(volDown, "vol-down");
volume(volUp, "vol-up");

// axis labels: text and place in percent of the panel
function marks(id, list, top, height) {
  const axis = document.getElementById(id);
  for (const [text, y] of list) {
    const el = document.createElement("span");
    el.className = "mark";
    el.textContent = text;
    el.style.top = (y - top) / height * 100 + "%";
    axis.appendChild(el);
  }
}
function ticks(id, from, to, step, big, top, height) {
  const axis = document.getElementById(id);
  for (let i = 0, y = from; y < to; i++, y = from + i * step) {
    const el = document.createElement("i");
    el.className = i % 5 == big ? "tick big" : "tick";
    el.style.top = (y - top) / height * 100 + "%";
    axis.appendChild(el);
  }
}
marks("leftMain", [["17,700", 117], ["17,626", 172], ["17,552", 227], ["17,478", 281], ["17,404", 337], ["17,330", 392], ["17,256", 448], ["17,109", 560], ["17,035", 617], ["16,961", 673], ["16,887", 729], ["16,813", 787], ["16,740", 844]], 77, 797);
const right = [];
for (let i = 0; i < 12; i++) right.push([70 - i * 5 + ",00", 110 + i * 68.5]);
marks("rightMain", right, 77, 797);
ticks("rightMain", 110, 874, 13.7, 0, 77, 797);
marks("leftSub", [["25,000", 905], ["00,000", 940], ["75,000", 975], ["50,000", 1010]], 875, 163);
ticks("leftSub", 877, 1012, 7, 4, 875, 163);
marks("rightSub", [["20,000", 905], ["15,000", 938], ["10,000", 970], ["5,000", 1003]], 875, 163);
ticks("rightSub", 879, 1036, 6.5, 4, 875, 163);

const times = document.getElementById("times");
for (const [text, x] of [["05/23", 49], ["", 114], ["05/24", 117], ["09:10", 387], ["09:20", 631], ["09:30", 833], ["09:40", 1006], ["09:50", 1178], ["10:00", 1328], ["10:10", 1502], ["10:20", 1659]]) {
  const el = document.createElement("span");
  el.textContent = text;
  if (text.includes("/")) el.className = "day";
  el.style.left = (x - 49) / 1817 * 100 + "%";
  times.appendChild(el);
}
```
